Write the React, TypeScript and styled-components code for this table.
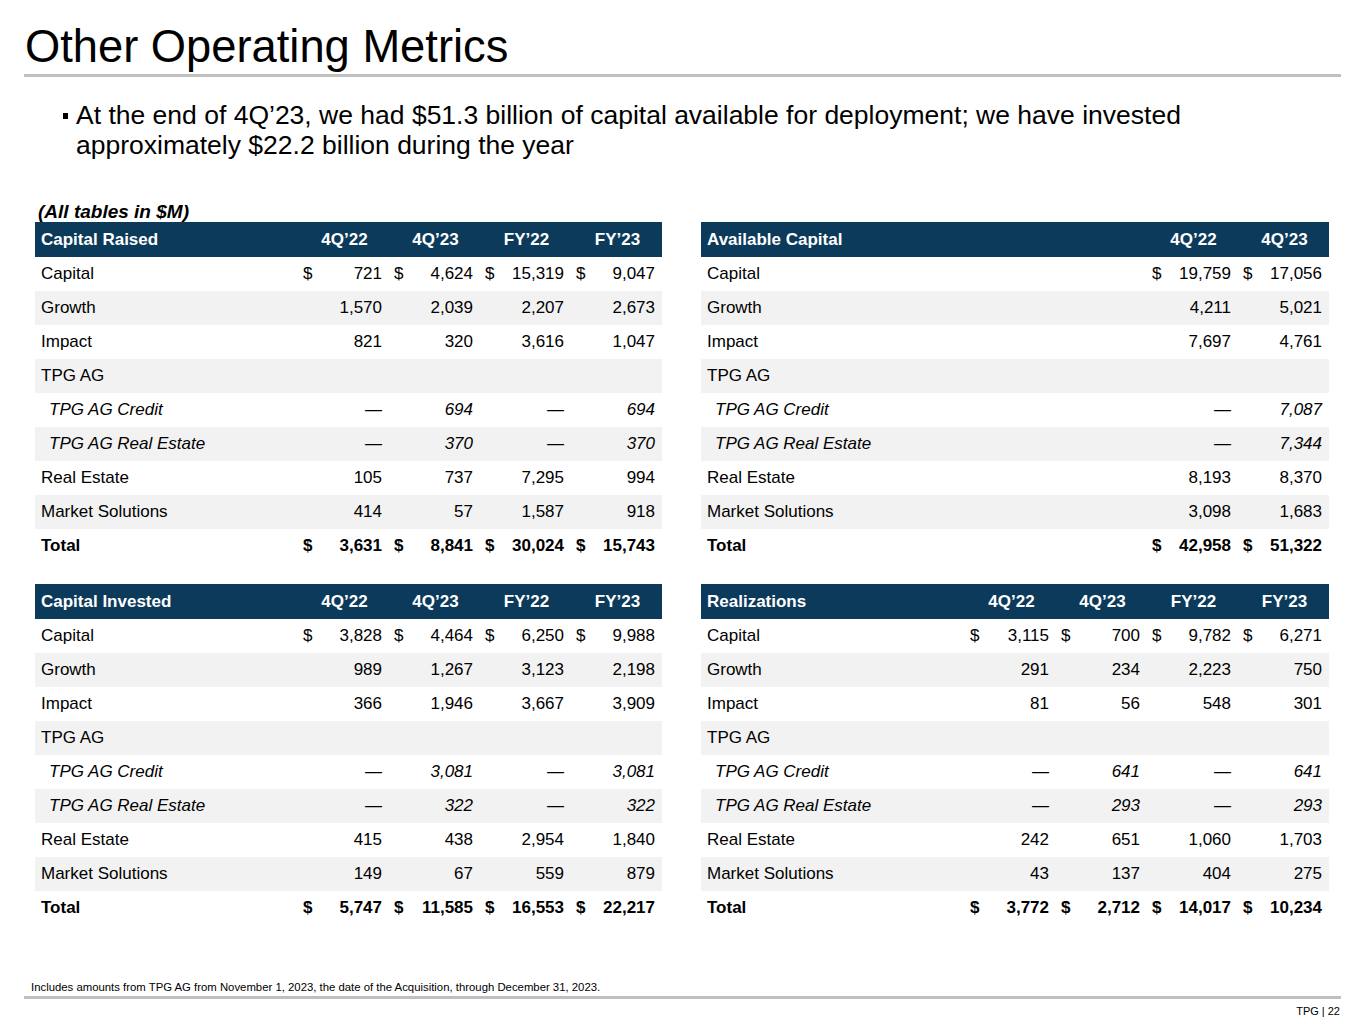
import React from "react";
import styled, { createGlobalStyle } from "styled-components";

const GlobalStyle = createGlobalStyle`
  html, body { margin: 0; padding: 0; background: #ffffff; }
  body { font-family: "Liberation Sans", Arial, sans-serif; color: #000; }
`;

const Page = styled.div`
  width: 1365px;
  height: 1024px;
  box-sizing: border-box;
  display: flex;
  flex-direction: column;
  background: #fff;
  overflow: hidden;
`;

const Title = styled.h1`
  margin: 24px 0 0 25px;
  font-size: 45.3px;
  line-height: 46px;
  font-weight: 400;
`;

const Rule = styled.div<{ $top: number }>`
  margin: ${(p) => p.$top}px 24px 0 24px;
  height: 3px;
  background: #bfbfbf;
`;

const Bullet = styled.div`
  display: flex;
  margin: 23px 0 0 63px;
  font-size: 26.5px;
  line-height: 30px;
`;

const BulletMark = styled.span`
  width: 5px;
  height: 6px;
  background: #000;
  margin-top: 13px;
  margin-right: 8px;
  flex: none;
`;

const BulletText = styled.p`
  margin: 0;
  width: 1230px;
`;

const Caption = styled.div`
  margin: 42px 0 0 38px;
  font-size: 19px;
  line-height: 20px;
  font-weight: 700;
  font-style: italic;
`;

const Tables = styled.div`
  display: grid;
  grid-template-columns: 627px 628px;
  column-gap: 39px;
  row-gap: 21px;
  margin: 0 0 0 35px;
`;

const TableBox = styled.div`
  display: flex;
  flex-direction: column;
`;

const HeadRow = styled.div<{ $cols: number }>`
  display: grid;
  grid-template-columns: 1fr repeat(${(p) => p.$cols}, 91px);
  height: 35px;
  align-items: center;
  background: #0c3a5b;
  color: #fff;
  font-weight: 700;
  font-size: 17px;
`;

const HeadLabel = styled.div`
  padding-left: 6px;
`;

const HeadCell = styled.div`
  text-align: center;
  padding-left: 2px;
`;

const BodyRow = styled.div<{ $cols: number; $shade: boolean; $bold: boolean; $italic: boolean }>`
  display: grid;
  grid-template-columns: 1fr repeat(${(p) => p.$cols}, 91px);
  height: 34px;
  align-items: center;
  background: ${(p) => (p.$shade ? "#f2f2f2" : "#ffffff")};
  font-size: 17px;
  font-weight: ${(p) => (p.$bold ? 700 : 400)};
  font-style: ${(p) => (p.$italic ? "italic" : "normal")};
`;

const RowLabel = styled.div<{ $indent: boolean }>`
  padding-left: ${(p) => (p.$indent ? 14 : 6)}px;
  white-space: nowrap;
`;

const ValueCell = styled.div`
  display: flex;
  justify-content: space-between;
  padding: 0 7px 0 5px;
  white-space: nowrap;
`;

const Dollar = styled.span``;
const Amount = styled.span`
  margin-left: auto;
`;

const Footer = styled.div`
  margin-top: auto;
  display: flex;
  flex-direction: column;
  padding-bottom: 6px;
`;

const Footnote = styled.div`
  font-size: 11.35px;
  line-height: 13px;
  padding-left: 31px;
`;

const PageNum = styled.div`
  align-self: flex-end;
  margin: 6px 25px 0 0;
  font-size: 11px;
  line-height: 13px;
`;

type Kind = "normal" | "group" | "sub" | "total";
type RowData = { label: string; values: string[]; kind?: Kind; dollar?: boolean };
type TableData = { title: string; headers: string[]; rows: RowData[] };

const mk = (v: string[][]): RowData[] => {
  const labels = [
    "Capital",
    "Growth",
    "Impact",
    "TPG AG",
    "TPG AG Credit",
    "TPG AG Real Estate",
    "Real Estate",
    "Market Solutions",
    "Total",
  ];
  const kinds: Kind[] = ["normal", "normal", "normal", "group", "sub", "sub", "normal", "normal", "total"];
  return labels.map((label, i) => ({
    label,
    values: v[i],
    kind: kinds[i],
    dollar: i === 0 || i === 8,
  }));
};

const Q4 = ["4Q\u201922", "4Q\u201923", "FY\u201922", "FY\u201923"];
const D = "\u2014";

const capitalRaised: TableData = {
  title: "Capital Raised",
  headers: Q4,
  rows: mk([
    ["721", "4,624", "15,319", "9,047"],
    ["1,570", "2,039", "2,207", "2,673"],
    ["821", "320", "3,616", "1,047"],
    [],
    [D, "694", D, "694"],
    [D, "370", D, "370"],
    ["105", "737", "7,295", "994"],
    ["414", "57", "1,587", "918"],
    ["3,631", "8,841", "30,024", "15,743"],
  ]),
};

const availableCapital: TableData = {
  title: "Available Capital",
  headers: ["4Q\u201922", "4Q\u201923"],
  rows: mk([
    ["19,759", "17,056"],
    ["4,211", "5,021"],
    ["7,697", "4,761"],
    [],
    [D, "7,087"],
    [D, "7,344"],
    ["8,193", "8,370"],
    ["3,098", "1,683"],
    ["42,958", "51,322"],
  ]),
};

const capitalInvested: TableData = {
  title: "Capital Invested",
  headers: Q4,
  rows: mk([
    ["3,828", "4,464", "6,250", "9,988"],
    ["989", "1,267", "3,123", "2,198"],
    ["366", "1,946", "3,667", "3,909"],
    [],
    [D, "3,081", D, "3,081"],
    [D, "322", D, "322"],
    ["415", "438", "2,954", "1,840"],
    ["149", "67", "559", "879"],
    ["5,747", "11,585", "16,553", "22,217"],
  ]),
};

const realizations: TableData = {
  title: "Realizations",
  headers: Q4,
  rows: mk([
    ["3,115", "700", "9,782", "6,271"],
    ["291", "234", "2,223", "750"],
    ["81", "56", "548", "301"],
    [],
    [D, "641", D, "641"],
    [D, "293", D, "293"],
    ["242", "651", "1,060", "1,703"],
    ["43", "137", "404", "275"],
    ["3,772", "2,712", "14,017", "10,234"],
  ]),
};

const MetricsTable: React.FC<{ data: TableData }> = ({ data }) => {
  const n = data.headers.length;
  return (
    <TableBox>
      <HeadRow $cols={n}>
        <HeadLabel>{data.title}</HeadLabel>
        {data.headers.map((h) => (
          <HeadCell key={h}>{h}</HeadCell>
        ))}
      </HeadRow>
      {data.rows.map((r, i) => (
        <BodyRow
          key={r.label}
          $cols={n}
          $shade={i % 2 === 1}
          $bold={r.kind === "total"}
          $italic={r.kind === "sub"}
        >
          <RowLabel $indent={r.kind === "sub"}>{r.label}</RowLabel>
          {Array.from({ length: n }).map((_, j) => (
            <ValueCell key={j}>
              {r.dollar ? <Dollar>$</Dollar> : null}
              <Amount>{r.values[j] ?? ""}</Amount>
            </ValueCell>
          ))}
        </BodyRow>
      ))}
    </TableBox>
  );
};

export default function App() {
  return (
    <Page>
      <GlobalStyle />
      <Title>Other Operating Metrics</Title>
      <Rule $top={4} />
      <Bullet>
        <BulletMark />
        <BulletText>
          At the end of 4Q’23, we had $51.3 billion of capital available for deployment; we have invested
          approximately $22.2 billion during the year
        </BulletText>
      </Bullet>
      <Caption>(All tables in $M)</Caption>
      <Tables>
        <MetricsTable data={capitalRaised} />
        <MetricsTable data={availableCapital} />
        <MetricsTable data={capitalInvested} />
        <MetricsTable data={realizations} />
      </Tables>
      <Footer>
        <Footnote>
          Includes amounts from TPG AG from November 1, 2023, the date of the Acquisition, through December 31, 2023.
        </Footnote>
        <Rule $top={2} />
        <PageNum>TPG | 22</PageNum>
      </Footer>
    </Page>
  );
}
